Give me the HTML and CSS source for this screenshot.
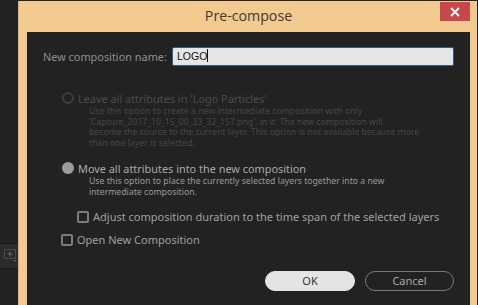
FILE: index.html
```html
<!DOCTYPE html>
<html>
<head>
<link rel="stylesheet" href="styles.css">
</head>
<body>
    <div class="app-left">
        <div class="tool-band">
            <svg class="tool-icon" width="14" height="16" viewBox="0 0 14 16">
                <rect x="1.5" y="2.5" width="11" height="9" fill="none" stroke="#5a5a5a" stroke-dasharray="2 1"/>
                <path d="M7 4.5v5M4.5 7h5" stroke="#6a6a6a"/>
                <path d="M10 13h4l-2 2z" fill="#5a5a5a"/>
            </svg>
        </div>
    </div>

    <div class="dialog">
        <div class="title-bar">
            <span class="title">Pre-compose</span>
            <div class="close">
                <svg width="10" height="10" viewBox="0 0 10 10">
                    <path d="M1 1L9 9M9 1L1 9" stroke="#fff" stroke-width="1.8"/>
                </svg>
            </div>
        </div>

        <div class="panel">
            <div class="name-row">
                <label>New composition name:</label>
                <div class="name-input">LOGO<span class="caret"></span></div>
            </div>

            <div class="option disabled">
                <div class="option-head">
                    <span class="radio"></span>
                    <span>Leave all attributes in 'Logo Particles'</span>
                </div>
                <div class="desc">
                    <div>Use this option to create a new intermediate composition with only</div>
                    <div>'Capture_2017_10_15_00_33_32_157.png', in it. The new composition will</div>
                    <div>become the source to the current layer. This option is not available because more</div>
                    <div>than one layer is selected.</div>
                </div>
            </div>

            <div class="option">
                <div class="option-head">
                    <span class="radio checked"></span>
                    <span>Move all attributes into the new composition</span>
                </div>
                <div class="desc">
                    <div>Use this option to place the currently selected layers together into a new</div>
                    <div>intermediate composition.</div>
                </div>
            </div>

            <div class="check sub">
                <span class="box"></span>
                <span>Adjust composition duration to the time span of the selected layers</span>
            </div>
            <div class="check">
                <span class="box"></span>
                <span>Open New Composition</span>
            </div>

            <div class="buttons">
                <div class="btn btn-ok">OK</div>
                <div class="btn btn-cancel">Cancel</div>
            </div>
        </div>
    </div>

    <div class="app-right">
        <div class="white-area"></div>
        <div class="right-band"></div>
    </div>
</body>
</html>
```

FILE: styles.css
```css
body {
    margin: 0;
    height: 305px;
    overflow: hidden;
    display: flex;
    background-color: #232323;
    font-family: "Noto Sans", "Open Sans", sans-serif;
}
.app-left {
    width: 18px;
    flex-shrink: 0;
    background-color: #232323;
}
.tool-band {
    margin-top: 243px;
    height: 24px;
    border-top: 1px solid #141414;
    border-bottom: 1px solid #1b1b1b;
    background-color: #2b2b2b;
}
.tool-icon {
    display: block;
    margin: 3px 0 0 3px;
}
.dialog {
    width: 443px;
    flex-shrink: 0;
    margin-top: 1px;
    padding: 0 7px 0 8px;
    background-color: #f2c98e;
    border-left: 1px solid #d9b27a;
    display: flex;
    flex-direction: column;
}
.title-bar {
    height: 31px;
    display: flex;
    align-items: flex-start;
    position: relative;
}
.title {
    flex: 1;
    text-align: center;
    margin-top: 5px;
    font-family: "Open Sans", sans-serif;
    font-size: 14.2px;
    color: #3d3a35;
}
.close {
    position: absolute;
    right: 0;
    top: 1px;
    width: 30px;
    height: 19px;
    background-color: #c7484c;
    display: flex;
    align-items: center;
    justify-content: center;
}
.panel {
    flex: 1;
    background-color: #222222;
    padding: 15px 16px 0 16px;
}
.name-row {
    display: flex;
    align-items: center;
    height: 19px;
}
.name-row label {
    width: 129px;
    flex-shrink: 0;
    font-size: 10.9px;
    color: #8f8f8f;
    white-space: nowrap;
}
.name-input {
    flex: 1;
    box-sizing: border-box;
    height: 19px;
    background-color: #e6e6e6;
    border: 1px solid #2f5c92;
    border-radius: 2px;
    padding-left: 4px;
    font-size: 10.5px;
    line-height: 17px;
    color: #111;
    font-family: "Liberation Sans", sans-serif;
}
.caret {
    display: inline-block;
    width: 1px;
    height: 13px;
    vertical-align: -2px;
    background-color: #111;
}
.option {
    margin-left: 19px;
}
.option.disabled {
    margin-top: 25px;
}
.option-head {
    display: flex;
    align-items: center;
    gap: 4px;
    height: 14px;
    font-size: 10.9px;
    color: #a9a9a9;
    white-space: nowrap;
}
.disabled .option-head {
    color: #4a4a4a;
}
.radio {
    width: 12px;
    height: 12px;
    flex-shrink: 0;
    box-sizing: border-box;
    border-radius: 50%;
    border: 2px solid #3d3d3d;
}
.radio.checked {
    border: none;
    background-color: #9c9c9c;
}
.desc {
    margin-left: 27px;
    margin-top: 1px;
    font-size: 8.7px;
    line-height: 10.6px;
    color: #9a9a9a;
    white-space: nowrap;
}
.disabled .desc {
    color: #464646;
}
.option + .option {
    margin-top: 13px;
}
.check {
    display: flex;
    align-items: center;
    gap: 4px;
    height: 14px;
    margin-left: 18px;
    margin-top: 9px;
    font-size: 11px;
    color: #a0a0a0;
    white-space: nowrap;
}
.check.sub {
    margin-left: 34px;
    margin-top: 12px;
}
.box {
    width: 12px;
    height: 12px;
    flex-shrink: 0;
    box-sizing: border-box;
    border: 2px solid #7c7c7c;
    border-radius: 2px;
}
.buttons {
    margin-top: 24px;
    display: flex;
    justify-content: flex-end;
    gap: 10px;
}
.btn {
    width: 89px;
    height: 20px;
    box-sizing: border-box;
    border-radius: 10px;
    font-size: 11px;
    line-height: 18px;
    text-align: center;
}
.btn-ok {
    width: 90px;
    background-color: #e4e4e4;
    border: 1px solid #e4e4e4;
    color: #333;
}
.btn-cancel {
    border: 1px solid #7a7a7a;
    color: #a8a8a8;
}
.app-right {
    flex: 1;
    border-left: 2px solid #1e1b17;
    display: flex;
    flex-direction: column;
}
.white-area {
    height: 205px;
    background-color: #fbf4f4;
}
.right-band {
    margin-top: 28px;
    height: 17px;
    border-top: 1px solid #151515;
    background-color: #2a2a2a;
}
```
